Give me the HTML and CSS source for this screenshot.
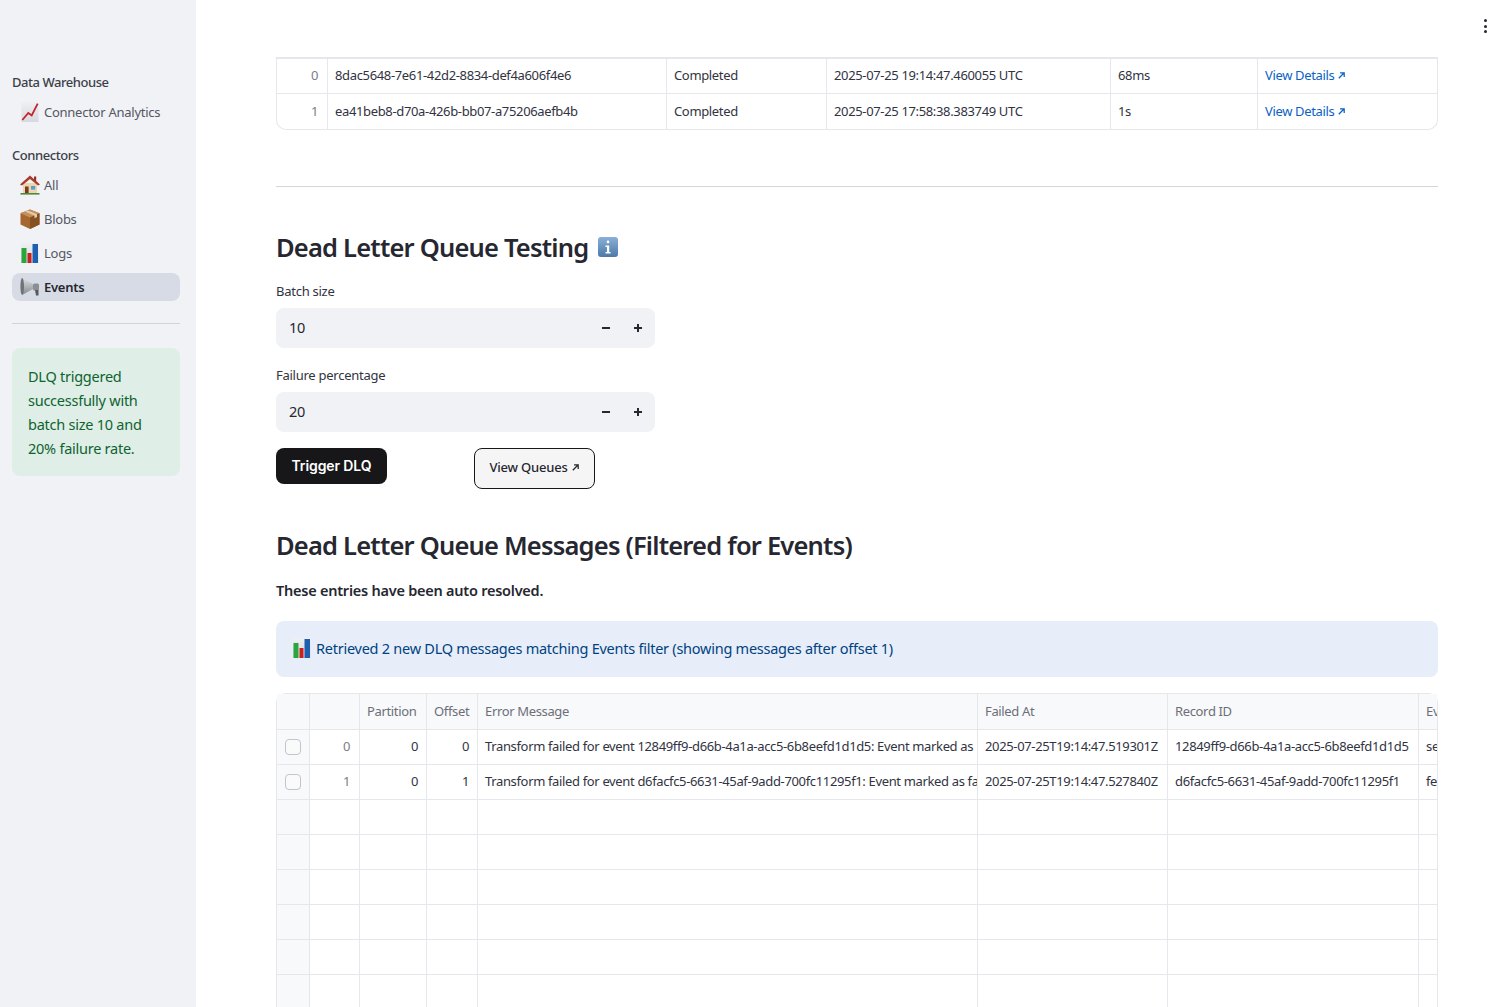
FILE: index.html
```html
<!DOCTYPE html>
<html lang="en">
<head>
    <meta charset="UTF-8">
    <title>Events</title>
    <link rel="stylesheet" href="styles.css">
</head>
<body>
    <!-- Shared emoji style icons -->
    <svg class="icon-defs" width="0" height="0">
        <defs>
            <linearGradient id="grad-pale" x1="0" y1="0" x2="0" y2="1">
                <stop offset="0" stop-color="#eef0f3"/>
                <stop offset="1" stop-color="#d6dade"/>
            </linearGradient>
            <linearGradient id="grad-horn" x1="0" y1="0" x2="0" y2="1">
                <stop offset="0" stop-color="#dfe1e3"/>
                <stop offset="1" stop-color="#84888c"/>
            </linearGradient>
            <linearGradient id="grad-info" x1="0" y1="0" x2="0" y2="1">
                <stop offset="0" stop-color="#8bb0d6"/>
                <stop offset="1" stop-color="#4c79a8"/>
            </linearGradient>
        </defs>
        <symbol id="ico-bars" viewBox="0 0 20 20">
            <rect x="1" y="0" width="17.5" height="20" fill="url(#grad-pale)"/>
            <rect x="1.5" y="5" width="5" height="15" fill="#2aa63c"/>
            <rect x="7.5" y="10" width="4" height="10" fill="#cc1f1f"/>
            <rect x="12.5" y="1" width="5.5" height="19" fill="#1f5fb0"/>
        </symbol>
        <symbol id="ico-arrow" viewBox="0 0 10 10">
            <path d="M2 8 L8 2 M3.4 2 H8 V6.6" fill="none" stroke="currentColor" stroke-width="1.4"/>
        </symbol>
        <symbol id="ico-minus" viewBox="0 0 10 10">
            <path d="M1 5 H9" stroke="currentColor" stroke-width="2"/>
        </symbol>
        <symbol id="ico-plus" viewBox="0 0 10 10">
            <path d="M1 5 H9 M5 1 V9" stroke="currentColor" stroke-width="2"/>
        </symbol>
    </svg>

    <div class="app">
        <aside class="sidebar">
            <div class="nav-heading first">Data Warehouse</div>
            <a class="nav-item">
                <svg class="nav-icon" viewBox="0 0 20 20">
                    <rect x="1.5" y="0" width="17" height="20" fill="url(#grad-pale)"/>
                    <path d="M2.3 18 L8.3 11 L11.7 13.5 L17.7 1.7" fill="none" stroke="#c8202c" stroke-width="1.8"/>
                </svg>
                Connector Analytics
            </a>
            <div class="nav-heading">Connectors</div>
            <div class="nav-list">
                <a class="nav-item">
                    <svg class="nav-icon" viewBox="0 0 20 20">
                        <rect x="3" y="8" width="14" height="10.5" fill="#ecd7ac"/>
                        <rect x="14" y="1.5" width="2.2" height="5" fill="#8f3024"/>
                        <path d="M0 9.5 L10 0.5 L20 9.5 L18 10.5 L10 4 L2 10.5 Z" fill="#a83a2c"/>
                        <rect x="5" y="11.5" width="3.6" height="7" fill="#7a3a22"/>
                        <rect x="11" y="11" width="4.2" height="3.6" fill="#5a9bd0"/>
                        <rect x="0.5" y="18" width="19" height="1.6" fill="#4d8a3c"/>
                    </svg>
                    All
                </a>
                <a class="nav-item">
                    <svg class="nav-icon" viewBox="0 0 20 20">
                        <path d="M10 0.5 L19.5 4.2 V15.5 L10 20 L0.5 15.5 V4.2 Z" fill="#a5672f"/>
                        <path d="M10 0.5 L19.5 4.2 L10 8.5 L0.5 4.2 Z" fill="#c4905c"/>
                        <path d="M10 8.5 V20 L19.5 15.5 V4.2 Z" fill="#87501f"/>
                        <path d="M5 2.4 L14.5 6.4 V9.2 L17 8 V5.2 L7.6 1.5 Z" fill="#e4cdb0"/>
                    </svg>
                    Blobs
                </a>
                <a class="nav-item">
                    <svg class="nav-icon"><use href="#ico-bars"/></svg>
                    Logs
                </a>
                <a class="nav-item active">
                    <svg class="nav-icon" viewBox="0 0 20 20">
                        <path d="M2 1 L13 7 V12 L2 18 Z" fill="url(#grad-horn)"/>
                        <ellipse cx="2.2" cy="9.5" rx="1.8" ry="8.5" fill="#6f7276"/>
                        <rect x="13" y="6.5" width="6" height="7" rx="1.5" fill="#8b8f93"/>
                        <path d="M15 13 H18.5 V18.5 H16 Z" fill="#55595e"/>
                    </svg>
                    Events
                </a>
            </div>
            <hr class="nav-rule">
            <div class="alert-success">DLQ triggered successfully with batch size 10 and 20% failure rate.</div>
        </aside>

        <main class="main">
            <button class="kebab" aria-label="Menu">
                <span></span><span></span><span></span>
            </button>

            <table class="data-table runs">
                <colgroup>
                    <col class="r0"><col class="r1"><col class="r2"><col class="r3"><col class="r4"><col class="r5">
                </colgroup>
                <tbody>
                    <tr>
                        <td class="idx">0</td>
                        <td>8dac5648-7e61-42d2-8834-def4a606f4e6</td>
                        <td>Completed</td>
                        <td>2025-07-25 19:14:47.460055 UTC</td>
                        <td>68ms</td>
                        <td><a class="link">View Details <svg class="arrow"><use href="#ico-arrow"/></svg></a></td>
                    </tr>
                    <tr>
                        <td class="idx">1</td>
                        <td>ea41beb8-d70a-426b-bb07-a75206aefb4b</td>
                        <td>Completed</td>
                        <td>2025-07-25 17:58:38.383749 UTC</td>
                        <td>1s</td>
                        <td><a class="link">View Details <svg class="arrow"><use href="#ico-arrow"/></svg></a></td>
                    </tr>
                </tbody>
            </table>

            <hr class="rule">

            <h3 class="title first-title">
                Dead Letter Queue Testing
                <svg class="title-icon" viewBox="0 0 20 20">
                    <rect width="20" height="20" rx="3" fill="url(#grad-info)"/>
                    <rect x="8.7" y="3.5" width="2.6" height="2.8" rx="1.3" fill="#fff"/>
                    <path d="M7.5 8.5 H11.2 V15 H12.6 V16.6 H7.5 V15 H9 V10 H7.5 Z" fill="#fff"/>
                </svg>
            </h3>

            <div class="field">
                <label class="field-label">Batch size</label>
                <div class="stepper">
                    <span class="stepper-value">10</span>
                    <span class="step"><svg class="step-icon"><use href="#ico-minus"/></svg></span>
                    <span class="step"><svg class="step-icon"><use href="#ico-plus"/></svg></span>
                </div>
            </div>
            <div class="field">
                <label class="field-label">Failure percentage</label>
                <div class="stepper">
                    <span class="stepper-value">20</span>
                    <span class="step"><svg class="step-icon"><use href="#ico-minus"/></svg></span>
                    <span class="step"><svg class="step-icon"><use href="#ico-plus"/></svg></span>
                </div>
            </div>

            <div class="actions">
                <button class="btn-primary">Trigger DLQ</button>
                <a class="btn-outline">View Queues <svg class="arrow"><use href="#ico-arrow"/></svg></a>
            </div>

            <h3 class="title second-title">Dead Letter Queue Messages (Filtered for Events)</h3>
            <p class="note">These entries have been auto resolved.</p>

            <div class="alert-info">
                <svg class="info-icon"><use href="#ico-bars"/></svg>
                Retrieved 2 new DLQ messages matching Events filter (showing messages after offset 1)
            </div>

            <table class="data-table messages">
                <colgroup>
                    <col class="m0"><col class="m1"><col class="m2"><col class="m3"><col class="m4"><col class="m5"><col class="m6"><col class="m7">
                </colgroup>
                <thead>
                    <tr>
                        <th></th>
                        <th></th>
                        <th>Partition</th>
                        <th>Offset</th>
                        <th>Error Message</th>
                        <th>Failed At</th>
                        <th>Record ID</th>
                        <th>Ev</th>
                    </tr>
                </thead>
                <tbody>
                    <tr>
                        <td class="check"><span class="checkbox"></span></td>
                        <td class="idx">0</td>
                        <td class="num">0</td>
                        <td class="num">0</td>
                        <td>Transform failed for event 12849ff9-d66b-4a1a-acc5-6b8eefd1d1d5: Event marked as</td>
                        <td>2025-07-25T19:14:47.519301Z</td>
                        <td>12849ff9-d66b-4a1a-acc5-6b8eefd1d1d5</td>
                        <td>se</td>
                    </tr>
                    <tr>
                        <td class="check"><span class="checkbox"></span></td>
                        <td class="idx">1</td>
                        <td class="num">0</td>
                        <td class="num">1</td>
                        <td>Transform failed for event d6facfc5-6631-45af-9add-700fc11295f1: Event marked as fa</td>
                        <td>2025-07-25T19:14:47.527840Z</td>
                        <td>d6facfc5-6631-45af-9add-700fc11295f1</td>
                        <td>fe</td>
                    </tr>
                    <tr><td class="check"></td><td></td><td></td><td></td><td></td><td></td><td></td><td></td></tr>
                    <tr><td class="check"></td><td></td><td></td><td></td><td></td><td></td><td></td><td></td></tr>
                    <tr><td class="check"></td><td></td><td></td><td></td><td></td><td></td><td></td><td></td></tr>
                    <tr><td class="check"></td><td></td><td></td><td></td><td></td><td></td><td></td><td></td></tr>
                    <tr><td class="check"></td><td></td><td></td><td></td><td></td><td></td><td></td><td></td></tr>
                    <tr><td class="check"></td><td></td><td></td><td></td><td></td><td></td><td></td><td></td></tr>
                </tbody>
            </table>
        </main>
    </div>
</body>
</html>
```

FILE: styles.css
```css
/* Basic reset */
* {
    margin: 0;
    padding: 0;
    box-sizing: border-box;
}

html, body {
    height: 100%;
    overflow: hidden;
}

body {
    font-family: "Noto Sans", "Open Sans", sans-serif;
    color: #262730;
    background-color: #fff;
}

.icon-defs {
    display: block;
    height: 0;
}

.app {
    display: flex;
    height: 100vh;
}

/* Sidebar */
.sidebar {
    flex: 0 0 196px;
    background-color: #f0f2f6;
    padding: 0 16px 0 12px;
}

.nav-heading {
    font-size: 13px;
    font-weight: 500;
    letter-spacing: -0.45px;
    line-height: 20px;
    height: 20px;
    color: #3d3f48;
    margin-top: 19px;
    margin-bottom: 6px;
}

.nav-heading.first {
    margin-top: 72px;
    margin-bottom: 6px;
}

.nav-item {
    display: flex;
    align-items: center;
    gap: 4px;
    height: 28px;
    padding-left: 8px;
    border-radius: 8px;
    font-size: 13px;
    letter-spacing: -0.26px;
    color: #555761;
}

.nav-item.active {
    background-color: #d6dbe6;
    color: #262730;
    font-weight: 600;
}

.nav-list {
    display: flex;
    flex-direction: column;
    gap: 6px;
}

.nav-icon {
    width: 20px;
    height: 20px;
    flex: none;
}

.nav-rule {
    border: none;
    border-top: 1px solid #d0d2d9;
    margin-top: 22px;
}

.alert-success {
    margin-top: 24px;
    height: 128px;
    padding: 16px;
    border-radius: 8px;
    background-color: #dfeee7;
    color: #0f6331;
    font-size: 14.5px;
    letter-spacing: -0.25px;
    line-height: 24px;
}

/* Main column */
.main {
    position: relative;
    flex: 1;
    min-width: 0;
    padding: 57px 74px 0 80px;
    overflow: hidden;
}

.kebab {
    position: absolute;
    top: 19px;
    right: 24px;
    width: 4px;
    display: flex;
    flex-direction: column;
    gap: 2.5px;
    border: none;
    background: none;
}

.kebab span {
    width: 3px;
    height: 3px;
    border-radius: 50%;
    background-color: #262730;
}

/* Tables */
.data-table {
    width: 1162px;
    table-layout: fixed;
    border-collapse: separate;
    border-spacing: 0;
    border: 1px solid #e6e7ec;
    font-size: 13px;
    letter-spacing: -0.35px;
    color: #31333f;
}

.data-table th,
.data-table td {
    height: 35px;
    padding: 0 8px 2px 7px;
    border-bottom: 1px solid #e6e7ec;
    border-right: 1px solid #e6e7ec;
    text-align: left;
    font-weight: 400;
    white-space: nowrap;
    overflow: hidden;
}

.data-table tr:last-child td {
    border-bottom: none;
}

.data-table td:last-child,
.data-table th:last-child {
    border-right: none;
}

.runs {
    border-top: 2px solid #e6e7ec;
    border-radius: 0 0 10px 10px;
}

.r0 { width: 51px; }
.r1 { width: 339px; }
.r2 { width: 160px; }
.r3 { width: 284px; }
.r4 { width: 147px; }

.messages {
    border-radius: 10px 10px 0 0;
    margin-top: 16px;
}

.messages th {
    height: 36px;
    background-color: #f8f9fb;
    color: #6d6f78;
}

.messages .check {
    background-color: #f8f9fb;
    padding: 0;
    text-align: center;
}

.m0 { width: 33px; }
.m1 { width: 50px; }
.m2 { width: 67px; }
.m3 { width: 51px; }
.m4 { width: 500px; }
.m5 { width: 190px; }
.m6 { width: 251px; }

.data-table td.idx {
    text-align: right;
    padding-right: 9px;
    color: #7b7d86;
}

.data-table td.num {
    text-align: right;
}

.checkbox {
    display: block;
    width: 16px;
    height: 16px;
    margin: 0 auto;
    border: 1px solid #c3c5cb;
    border-radius: 4px;
    background-color: #fafafb;
}

.link {
    color: #0b62c4;
}

.arrow {
    width: 9px;
    height: 9px;
}

.rule {
    border: none;
    border-top: 1px solid #d5d6db;
    width: 1162px;
    margin-top: 56px;
}

/* Headings */
.title {
    font-size: 25.5px;
    font-weight: 600;
    letter-spacing: -0.8px;
    line-height: 36px;
    color: #262730;
    width: 1162px;
}

.first-title {
    display: flex;
    align-items: center;
    gap: 10px;
    margin-top: 42px;
}

.title-icon {
    width: 20px;
    height: 20px;
}

.second-title {
    margin-top: 38px;
}

.note {
    margin-top: 15px;
    font-size: 14.5px;
    font-weight: 600;
    letter-spacing: -0.24px;
    line-height: 24px;
}

/* Number inputs */
.field {
    width: 379px;
    margin-top: 17px;
}

.first-title + .field {
    margin-top: 16px;
}

.field-label {
    display: block;
    font-size: 13px;
    letter-spacing: -0.26px;
    line-height: 20px;
    color: #31333f;
    margin-bottom: 7px;
}

.stepper {
    display: flex;
    align-items: center;
    height: 40px;
    padding: 0 1px 0 13px;
    border-radius: 8px;
    background-color: #f0f2f6;
}

.stepper-value {
    flex: 1;
    padding-bottom: 2px;
    font-size: 14.5px;
    letter-spacing: -0.2px;
}

.step {
    display: flex;
    justify-content: center;
    width: 32px;
    color: #262730;
}

.step-icon {
    width: 10px;
    height: 10px;
}

/* Buttons */
.actions {
    display: flex;
    align-items: flex-start;
    gap: 87px;
    margin-top: 16px;
}

.btn-primary {
    width: 111px;
    height: 36px;
    padding-bottom: 2px;
    border: none;
    border-radius: 8px;
    background-color: #17171a;
    color: #fff;
    font-family: Inter, sans-serif;
    font-size: 14px;
    font-weight: 600;
    letter-spacing: -0.1px;
}

.btn-outline {
    display: flex;
    align-items: center;
    justify-content: center;
    gap: 3px;
    width: 121px;
    height: 41px;
    padding-bottom: 3px;
    border: 1px solid #17171a;
    border-radius: 8px;
    background-color: #f5f5f6;
    color: #262730;
    font-size: 13px;
    font-weight: 500;
    letter-spacing: -0.2px;
}

/* Info banner */
.alert-info {
    display: flex;
    align-items: center;
    gap: 4px;
    width: 1162px;
    height: 56px;
    margin-top: 19px;
    padding: 0 16px 2px;
    border-radius: 8px;
    background-color: #e7eefa;
    color: #004280;
    font-size: 14.5px;
    letter-spacing: -0.25px;
}

.info-icon {
    width: 20px;
    height: 20px;
    flex: none;
}
```
